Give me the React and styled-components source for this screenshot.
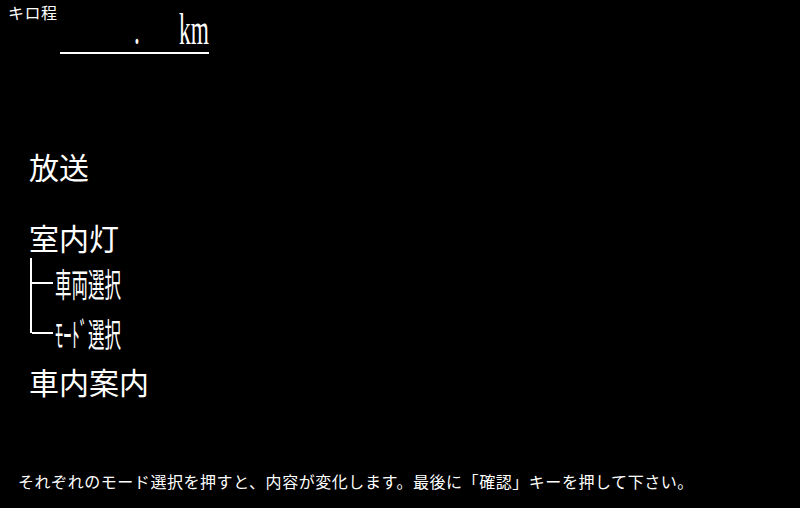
import React from 'react';
import styled, { createGlobalStyle } from 'styled-components';

const GlobalStyle = createGlobalStyle`
  html, body {
    margin: 0;
    padding: 0;
    background: #000;
  }
  body {
    font-family: "Noto Sans CJK JP", "Noto Sans", sans-serif;
    color: #fff;
  }
`;

const branches = [
  { label: '車両選択', last: false },
  { label: 'ﾓｰﾄﾞ選択', last: true },
];

const App = () => {
  return (
    <Page>
      <GlobalStyle />
      <Header>
        <Label>キロ程</Label>
        <Field>
          <Dot>.</Dot>
          <Unit>km</Unit>
        </Field>
      </Header>
      <Menu>
        <Item $top={0}>放送</Item>
        <Item $top={41}>室内灯</Item>
        <Tree>
          {branches.map((b) => (
            <Branch key={b.label}>
              <Elbow>
                <Stem />
                <Arm $last={b.last} />
              </Elbow>
              <SubLabel>
                <Squeeze>{b.label}</Squeeze>
              </SubLabel>
            </Branch>
          ))}
        </Tree>
        <Item $top={8}>車内案内</Item>
      </Menu>
      <Footer>
        それぞれのモード選択を押すと、内容が変化します。最後に「確認」キーを押して下さい。
      </Footer>
    </Page>
  );
};

const Page = styled.div`
  display: flex;
  flex-direction: column;
  width: 800px;
  height: 508px;
  background: #000;
  overflow: hidden;
`;

const Header = styled.div`
  display: flex;
  align-items: flex-start;
  padding: 4px 0 0 8px;
`;

const Label = styled.div`
  font-size: 16px;
  line-height: 1;
  letter-spacing: 0.5px;
`;

const Field = styled.div`
  display: flex;
  justify-content: flex-end;
  align-items: flex-end;
  width: 149px;
  height: 48px;
  margin-left: 2px;
  border-bottom: 2px solid #fff;
`;

const Dot = styled.span`
  display: inline-block;
  width: 45px;
  font-family: "Liberation Serif", serif;
  font-size: 44px;
  line-height: 1;
  transform: scaleX(0.53);
  transform-origin: left bottom;
`;

const Unit = styled.span`
  display: inline-block;
  width: 30px;
  font-family: "Liberation Serif", serif;
  font-size: 44px;
  line-height: 1;
  white-space: nowrap;
  transform: scaleX(0.53);
  transform-origin: left bottom;
`;

const Menu = styled.div`
  display: flex;
  flex-direction: column;
  align-items: flex-start;
  margin-top: 97px;
  padding-left: 29px;
`;

const Item = styled.div`
  margin-top: ${({ $top }) => $top}px;
  font-size: 30px;
  line-height: 1;
`;

const Tree = styled.div`
  display: flex;
  flex-direction: column;
  margin: 6px 0 0 1px;
`;

const Branch = styled.div`
  display: flex;
  height: 50px;
`;

const Elbow = styled.div`
  display: flex;
  flex-direction: column;
  width: 23px;
`;

const Stem = styled.div`
  flex: 1;
  border-left: 2px solid #fff;
`;

const Arm = styled.div`
  flex: 1;
  border-top: 2px solid #fff;
  border-left: ${({ $last }) => ($last ? 'none' : '2px solid #fff')};
  margin-left: ${({ $last }) => ($last ? '2px' : '0')};
  margin-top: -1px;
`;

const SubLabel = styled.div`
  display: flex;
  align-items: center;
  width: 66px;
  margin-left: 2px;
`;

const Squeeze = styled.span`
  display: inline-block;
  font-size: 33px;
  line-height: 1;
  white-space: nowrap;
  transform: scaleX(0.5);
  transform-origin: left center;
`;

const Footer = styled.div`
  margin-top: auto;
  padding: 0 0 19px 18px;
  font-size: 16px;
  line-height: 1;
  letter-spacing: 0.55px;
`;

export default App;
